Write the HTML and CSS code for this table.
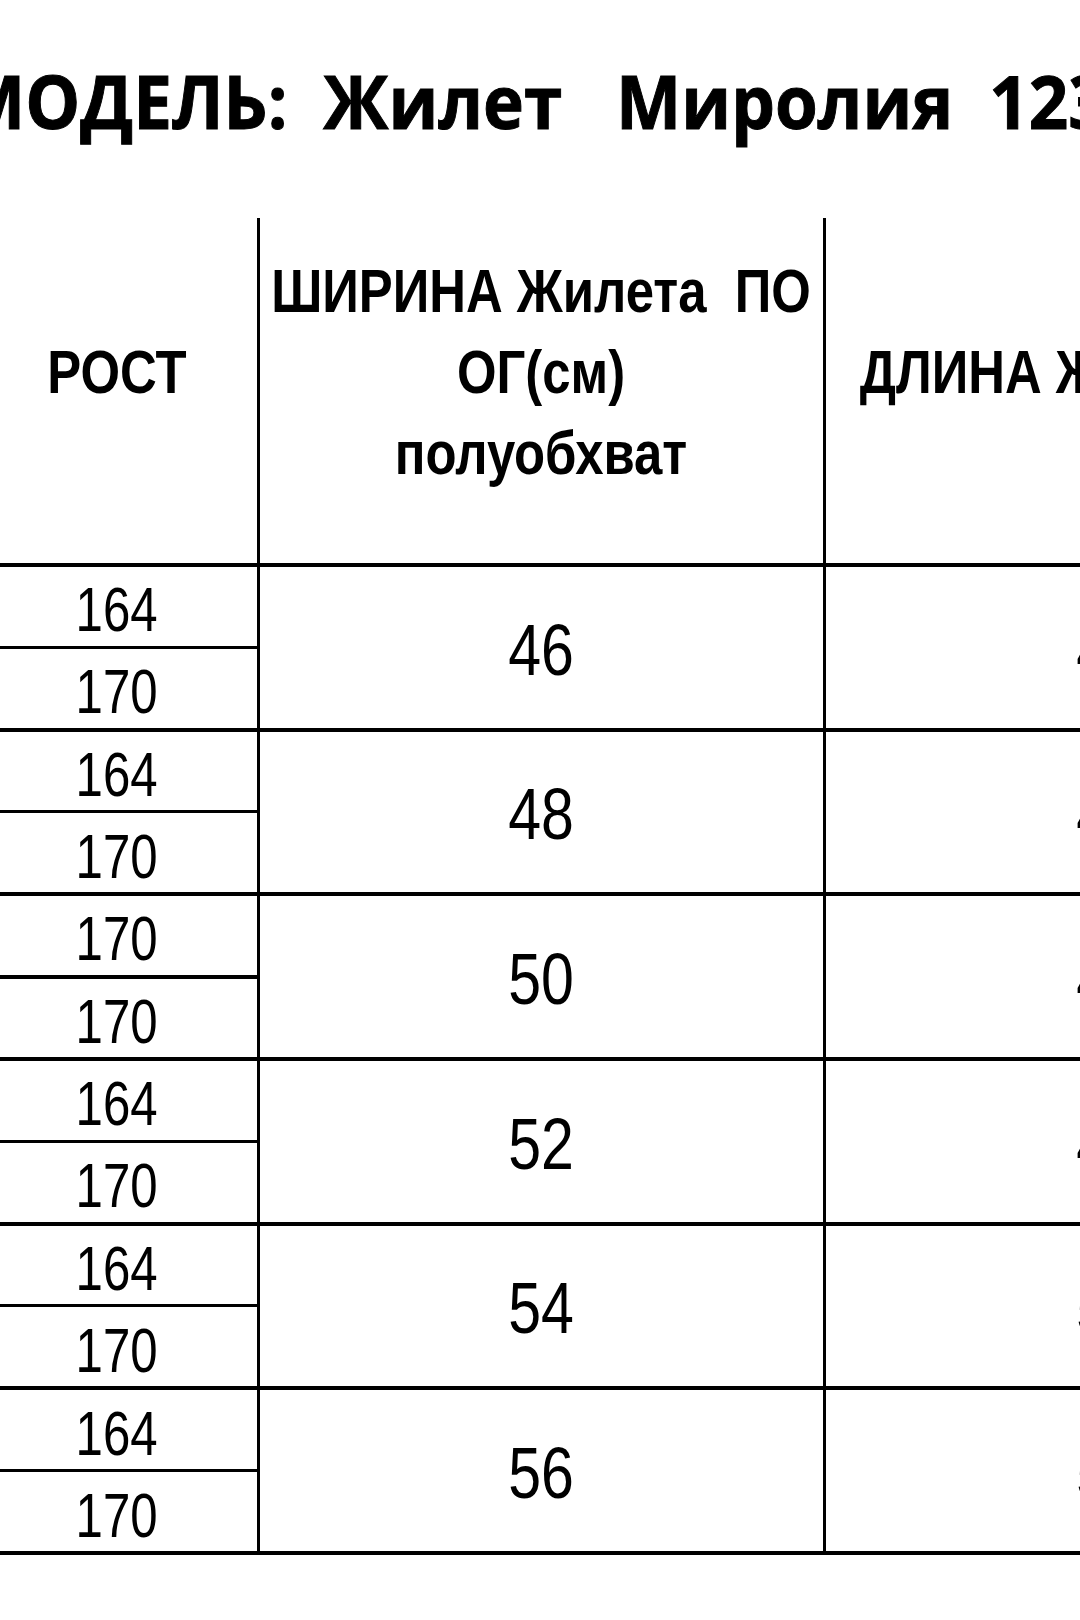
FILE: index.html
```html
<!DOCTYPE html>
<html lang="ru">
<head>
<meta charset="utf-8">
<title>Размерная таблица</title>
<link rel="stylesheet" href="styles.css">
</head>
<body>
<div class="title"><span class="title-text">МОДЕЛЬ:  Жилет   Миролия  1234</span></div>
<div class="sheet">
  <div class="row head">
    <div class="cell"><span class="sx">РОСТ</span></div>
    <div class="cell"><span class="sx">ШИРИНА Жилета  ПО<br>ОГ(см)<br>полуобхват</span></div>
    <div class="cell"><span class="sx">ДЛИНА Жилета (см)</span></div>
  </div>
  <div class="row group">
    <div class="cell split"><div class="sub"><span class="sx">164</span></div><div class="sub"><span class="sx">170</span></div></div>
    <div class="cell big"><span class="sx">46</span></div>
    <div class="cell big"><span class="sx">47</span></div>
  </div>
  <div class="row group">
    <div class="cell split"><div class="sub"><span class="sx">164</span></div><div class="sub"><span class="sx">170</span></div></div>
    <div class="cell big"><span class="sx">48</span></div>
    <div class="cell big"><span class="sx">48</span></div>
  </div>
  <div class="row group">
    <div class="cell split"><div class="sub"><span class="sx">170</span></div><div class="sub thick"><span class="sx">170</span></div></div>
    <div class="cell big"><span class="sx">50</span></div>
    <div class="cell big"><span class="sx">49</span></div>
  </div>
  <div class="row group">
    <div class="cell split"><div class="sub"><span class="sx">164</span></div><div class="sub"><span class="sx">170</span></div></div>
    <div class="cell big"><span class="sx">52</span></div>
    <div class="cell big"><span class="sx">49</span></div>
  </div>
  <div class="row group">
    <div class="cell split"><div class="sub"><span class="sx">164</span></div><div class="sub"><span class="sx">170</span></div></div>
    <div class="cell big"><span class="sx">54</span></div>
    <div class="cell big"><span class="sx">50</span></div>
  </div>
  <div class="row group last">
    <div class="cell split"><div class="sub"><span class="sx">164</span></div><div class="sub"><span class="sx">170</span></div></div>
    <div class="cell big"><span class="sx">56</span></div>
    <div class="cell big"><span class="sx">51</span></div>
  </div>
</div>
</body>
</html>
```
FILE: styles.css
```css
html, body {
  margin: 0;
  padding: 0;
  background: #fff;
  overflow: hidden;
}

body {
  width: 1080px;
  height: 1620px;
  font-family: "Liberation Sans", Arial, sans-serif;
  color: #000;
}

.title {
  height: 218px;
  box-sizing: border-box;
  padding-top: 64px;
  white-space: pre;
  font-family: "Open Sans", "Liberation Sans", sans-serif;
  font-weight: 700;
  font-size: 74px;
  line-height: 74px;
}

.title-text {
  display: inline-block;
  transform: scaleX(0.935);
  transform-origin: 0 0;
  margin-left: -40px;
  -webkit-text-stroke: 1px #000;
}

.sheet {
  margin-left: -23px;
  width: 1420px;
}

.row {
  display: grid;
  grid-template-columns: 283px 566px 570px;
}

.cell {
  box-sizing: border-box;
  border-right: 3px solid #000;
  display: flex;
  align-items: center;
  justify-content: center;
  text-align: center;
}

.sx {
  display: inline-block;
  transform: scaleX(0.82);
  white-space: pre;
}

.head {
  height: 345px;
}

.head .cell {
  font-weight: 700;
  font-size: 62px;
  line-height: 81px;
  padding-bottom: 38px;
}

.group {
  box-sizing: border-box;
  height: 164.67px;
  border-top: 4px solid #000;
}

.group.last {
  height: 168.67px;
  border-bottom: 4px solid #000;
}

.split {
  flex-direction: column;
  align-items: stretch;
}

.sub {
  flex: 1;
  display: flex;
  align-items: center;
  justify-content: center;
  font-size: 63px;
  padding-top: 6px;
}

.sub .sx {
  transform: scaleX(0.78);
}

.sub + .sub {
  border-top: 3px solid #000;
}

.sub.thick {
  border-top-width: 4px;
}

.big {
  font-size: 72px;
  padding-top: 5px;
}
```
